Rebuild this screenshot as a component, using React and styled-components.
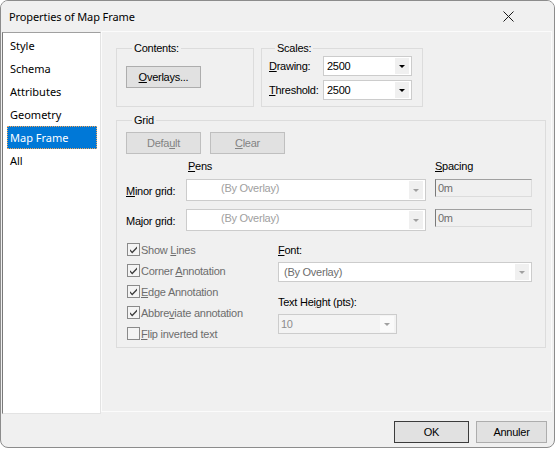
import React from "react";
import styled, { createGlobalStyle } from "styled-components";

const GlobalStyle = createGlobalStyle`
  html, body { margin: 0; padding: 0; background: #ffffff; }
  body { font-family: "Liberation Sans", Arial, sans-serif; font-size: 11px; color: #000; letter-spacing: -0.25px; }
  #root { width: 556px; height: 449px; }
  * { box-sizing: border-box; }
`;

const Window = styled.div`
  width: 555px;
  height: 448px;
  border: 1px solid #8c8c8c;
  border-radius: 8px;
  overflow: hidden;
  background: #f0f0f0;
  display: flex;
  flex-direction: column;
`;

const TitleBar = styled.div`
  height: 30px;
  flex: none;
  display: flex;
  align-items: center;
  justify-content: space-between;
  padding: 0 40px 0 8px;
  background: #f0f0f0;
`;

const Title = styled.span`
  font-family: "Noto Sans", "Open Sans", sans-serif;
  font-size: 11px;
  color: #000;
  letter-spacing: -0.1px;
`;

const Body = styled.div`
  flex: 1;
  display: flex;
  min-height: 0;
`;

const List = styled.ul`
  list-style: none;
  margin: 1px 0 0 1px;
  padding: 1px 0 0 4px;
  width: 99px;
  height: 382px;
  background: #ffffff;
  border-style: solid;
  border-width: 1px;
  border-color: #a0a0a0 #e3e3e3 #e3e3e3 #7a7a7a;
`;

const Item = styled.li`
  height: 23px;
  width: 90px;
  display: flex;
  align-items: center;
  padding-left: 2px;
  font-family: "Noto Sans", "Open Sans", sans-serif;
  font-size: 11px;
  letter-spacing: 0;
  color: ${(p) => (p.$selected ? "#ffffff" : "#000000")};
  background: ${(p) => (p.$selected ? "#0078d7" : "transparent")};
  border: 1px ${(p) => (p.$selected ? "dotted #f3a55a" : "solid transparent")};
`;

const Panel = styled.div`
  margin: 0 0 2px 0;
  width: 451px;
  border: 1px solid #fbfbfb;
  padding: 10px 0 0 14px;
  display: flex;
  flex-direction: column;
`;

const TopRow = styled.div`
  display: flex;
  gap: 7px;
`;

const Group = styled.fieldset`
  margin: 0;
  padding: 0 0 0 ${(p) => p.$padLeft || 9}px;
  border: 1px solid #dcdcdc;
  width: ${(p) => p.$width}px;
  min-width: 0;
  margin-top: ${(p) => p.$top || 0}px;
`;

const Legend = styled.legend`
  margin-left: 6px;
  padding: 0 2px;
  line-height: 13px;
  font-size: 11px;
`;

const Key = styled.span`
  text-decoration: underline;
  text-underline-offset: 1px;
`;

const Button = styled.button`
  width: ${(p) => p.$width || 75}px;
  height: 22px;
  padding: 0;
  font-family: "Liberation Sans", Arial, sans-serif;
  font-size: 11px;
  letter-spacing: inherit;
  background: #e1e1e1;
  border: 1px solid ${(p) => (p.$default ? "#3c3c3c" : p.disabled ? "#bfbfbf" : "#adadad")};
  color: ${(p) => (p.disabled ? "#838383" : "#000")};
  margin-top: ${(p) => p.$top || 0}px;
  margin-bottom: ${(p) => p.$bottom || 0}px;
`;

const ScaleRows = styled.div`
  display: flex;
  flex-direction: column;
  gap: 4px;
  padding: 1px 0 6px 0;
`;

const ScaleRow = styled.div`
  display: flex;
  align-items: center;
`;

const FieldLabel = styled.span`
  width: ${(p) => p.$width}px;
  flex: none;
`;

const Select = styled.div`
  width: ${(p) => p.$width}px;
  height: ${(p) => p.$height || 20}px;
  display: flex;
  align-items: center;
  background: ${(p) => p.$bg || "#ffffff"};
  border: 1px solid #cccccc;
  padding: 1px 2px 1px ${(p) => p.$pad || 3}px;
  flex: none;
`;

const Value = styled.span`
  flex: 1;
  color: ${(p) => p.$color || "#000"};
  white-space: nowrap;
  overflow: hidden;
  margin-top: ${(p) => p.$shift || 0}px;
`;

const ArrowBox = styled.span`
  width: 14px;
  align-self: stretch;
  background: ${(p) => p.$bg || "#f0f0f0"};
  display: flex;
  align-items: center;
  justify-content: center;
  &::after {
    content: "";
    border-left: 3px solid transparent;
    border-right: 3px solid transparent;
    border-top: 3px solid ${(p) => p.$color || "#000"};
  }
`;

const GridBody = styled.div`
  padding: 5px 0 3px 0;
`;

const ButtonRow = styled.div`
  display: flex;
  gap: 9px;
`;

const PenGrid = styled.div`
  display: grid;
  grid-template-columns: 51px 240px 97px;
  column-gap: 9px;
  row-gap: 8px;
  margin-top: 6px;
  align-items: center;
`;

const ColHead = styled.div`
  height: 13px;
  line-height: 13px;
  padding-left: ${(p) => p.$pad || 0}px;
  margin-bottom: -2px;
`;

const RowLabel = styled.div`
  padding-top: 1px;
  white-space: nowrap;
`;

const SpaceInput = styled.div`
  align-self: start;
  height: 18px;
  border-style: solid;
  border-width: 1px;
  border-color: #a0a0a0 #dcdcdc #dcdcdc #7a7a7a;
  background: #f0f0f0;
  color: #6d6d6d;
  display: flex;
  align-items: center;
  padding-left: 2px;
`;

const Lower = styled.div`
  display: grid;
  grid-template-columns: 152px 1fr;
  margin-top: 8px;
`;

const Checks = styled.div`
  display: flex;
  flex-direction: column;
`;

const CheckRow = styled.label`
  height: 21px;
  display: flex;
  align-items: center;
  gap: 1px;
  padding-left: 1px;
  color: #6d6d6d;
`;

const FontCol = styled.div`
  display: flex;
  flex-direction: column;
`;

const ColLabel = styled.div`
  line-height: 13px;
  margin-top: ${(p) => p.$top}px;
  margin-bottom: 5px;
`;

const Footer = styled.div`
  height: 33px;
  flex: none;
  display: flex;
  justify-content: flex-end;
  gap: 7px;
  padding: 7px 7px 0 0;
`;

function CheckBox({ checked }) {
  return (
    <svg width="13" height="13" viewBox="0 0 13 13">
      <rect x="0.5" y="0.5" width="12" height="12" fill="#f4f4f4" stroke="#8a8a8a" />
      {checked && (
        <path d="M3 6.2 L5.2 8.6 L10 3.6 L10 5.4 L5.2 10.4 L3 8 Z" fill="#3c3c3c" />
      )}
    </svg>
  );
}

function CloseIcon() {
  return (
    <svg width="11" height="11" viewBox="0 0 11 11">
      <path d="M0.5 0.5 L10.5 10.5 M10.5 0.5 L0.5 10.5" stroke="#1a1a1a" strokeWidth="1" />
    </svg>
  );
}

const items = ["Style", "Schema", "Attributes", "Geometry", "Map Frame", "All"];

export default function App() {
  return (
    <>
      <GlobalStyle />
      <Window>
        <TitleBar>
          <Title>Properties of Map Frame</Title>
          <CloseIcon />
        </TitleBar>
        <Body>
          <List>
            {items.map((it) => (
              <Item key={it} $selected={it === "Map Frame"}>
                {it}
              </Item>
            ))}
          </List>
          <Panel>
            <TopRow>
              <Group $width={138}>
                <Legend>Contents:</Legend>
                <Button $top={11} $bottom={18}>
                  <Key>O</Key>verlays...
                </Button>
              </Group>
              <Group $width={162} $padLeft={7}>
                <Legend>Scales:</Legend>
                <ScaleRows>
                  <ScaleRow>
                    <FieldLabel $width={54}>
                      <Key>D</Key>rawing:
                    </FieldLabel>
                    <Select $width={89}>
                      <Value>2500</Value>
                      <ArrowBox />
                    </Select>
                  </ScaleRow>
                  <ScaleRow>
                    <FieldLabel $width={54}>
                      <Key>T</Key>hreshold:
                    </FieldLabel>
                    <Select $width={89}>
                      <Value>2500</Value>
                      <ArrowBox />
                    </Select>
                  </ScaleRow>
                </ScaleRows>
              </Group>
            </TopRow>
            <Group $width={430} $top={7}>
              <Legend>Grid</Legend>
              <GridBody>
                <ButtonRow>
                  <Button disabled>
                    Defa<Key>u</Key>lt
                  </Button>
                  <Button disabled>
                    <Key>C</Key>lear
                  </Button>
                </ButtonRow>
                <PenGrid>
                  <span />
                  <ColHead $pad={2}>
                    <Key>P</Key>ens
                  </ColHead>
                  <ColHead>
                    <Key>S</Key>pacing
                  </ColHead>
                  <RowLabel>
                    <Key>M</Key>inor grid:
                  </RowLabel>
                  <Select $width={240} $height={22} $pad={34}>
                    <Value $color="#a0a0a0" $shift={-4}>(By Overlay)</Value>
                    <ArrowBox $color="#a0a0a0" />
                  </Select>
                  <SpaceInput>0m</SpaceInput>
                  <RowLabel>
                    Ma<Key>j</Key>or grid:
                  </RowLabel>
                  <Select $width={240} $height={22} $pad={34}>
                    <Value $color="#a0a0a0" $shift={-4}>(By Overlay)</Value>
                    <ArrowBox $color="#a0a0a0" />
                  </Select>
                  <SpaceInput>0m</SpaceInput>
                </PenGrid>
                <Lower>
                  <Checks>
                    <CheckRow>
                      <CheckBox checked />
                      <span>
                        Show <Key>L</Key>ines
                      </span>
                    </CheckRow>
                    <CheckRow>
                      <CheckBox checked />
                      <span>
                        Corner <Key>A</Key>nnotation
                      </span>
                    </CheckRow>
                    <CheckRow>
                      <CheckBox checked />
                      <span>
                        <Key>E</Key>dge Annotation
                      </span>
                    </CheckRow>
                    <CheckRow>
                      <CheckBox checked />
                      <span>
                        Abbre<Key>v</Key>iate annotation
                      </span>
                    </CheckRow>
                    <CheckRow>
                      <CheckBox />
                      <span>
                        <Key>F</Key>lip inverted text
                      </span>
                    </CheckRow>
                  </Checks>
                  <FontCol>
                    <ColLabel $top={5}>
                      <Key>F</Key>ont:
                    </ColLabel>
                    <Select $width={254} $pad={5}>
                      <Value $color="#6d6d6d">(By Overlay)</Value>
                      <ArrowBox $color="#a0a0a0" />
                    </Select>
                    <ColLabel $top={14}>
                      Text Hei<Key>g</Key>ht (pts):
                    </ColLabel>
                    <Select $width={119} $pad={2} $bg="#f3f3f3">
                      <Value $color="#8d8d8d">10</Value>
                      <ArrowBox $color="#a0a0a0" $bg="#fafafa" />
                    </Select>
                  </FontCol>
                </Lower>
              </GridBody>
            </Group>
          </Panel>
        </Body>
        <Footer>
          <Button $width={75} $default>
            OK
          </Button>
          <Button $width={71}>Annuler</Button>
        </Footer>
      </Window>
    </>
  );
}
